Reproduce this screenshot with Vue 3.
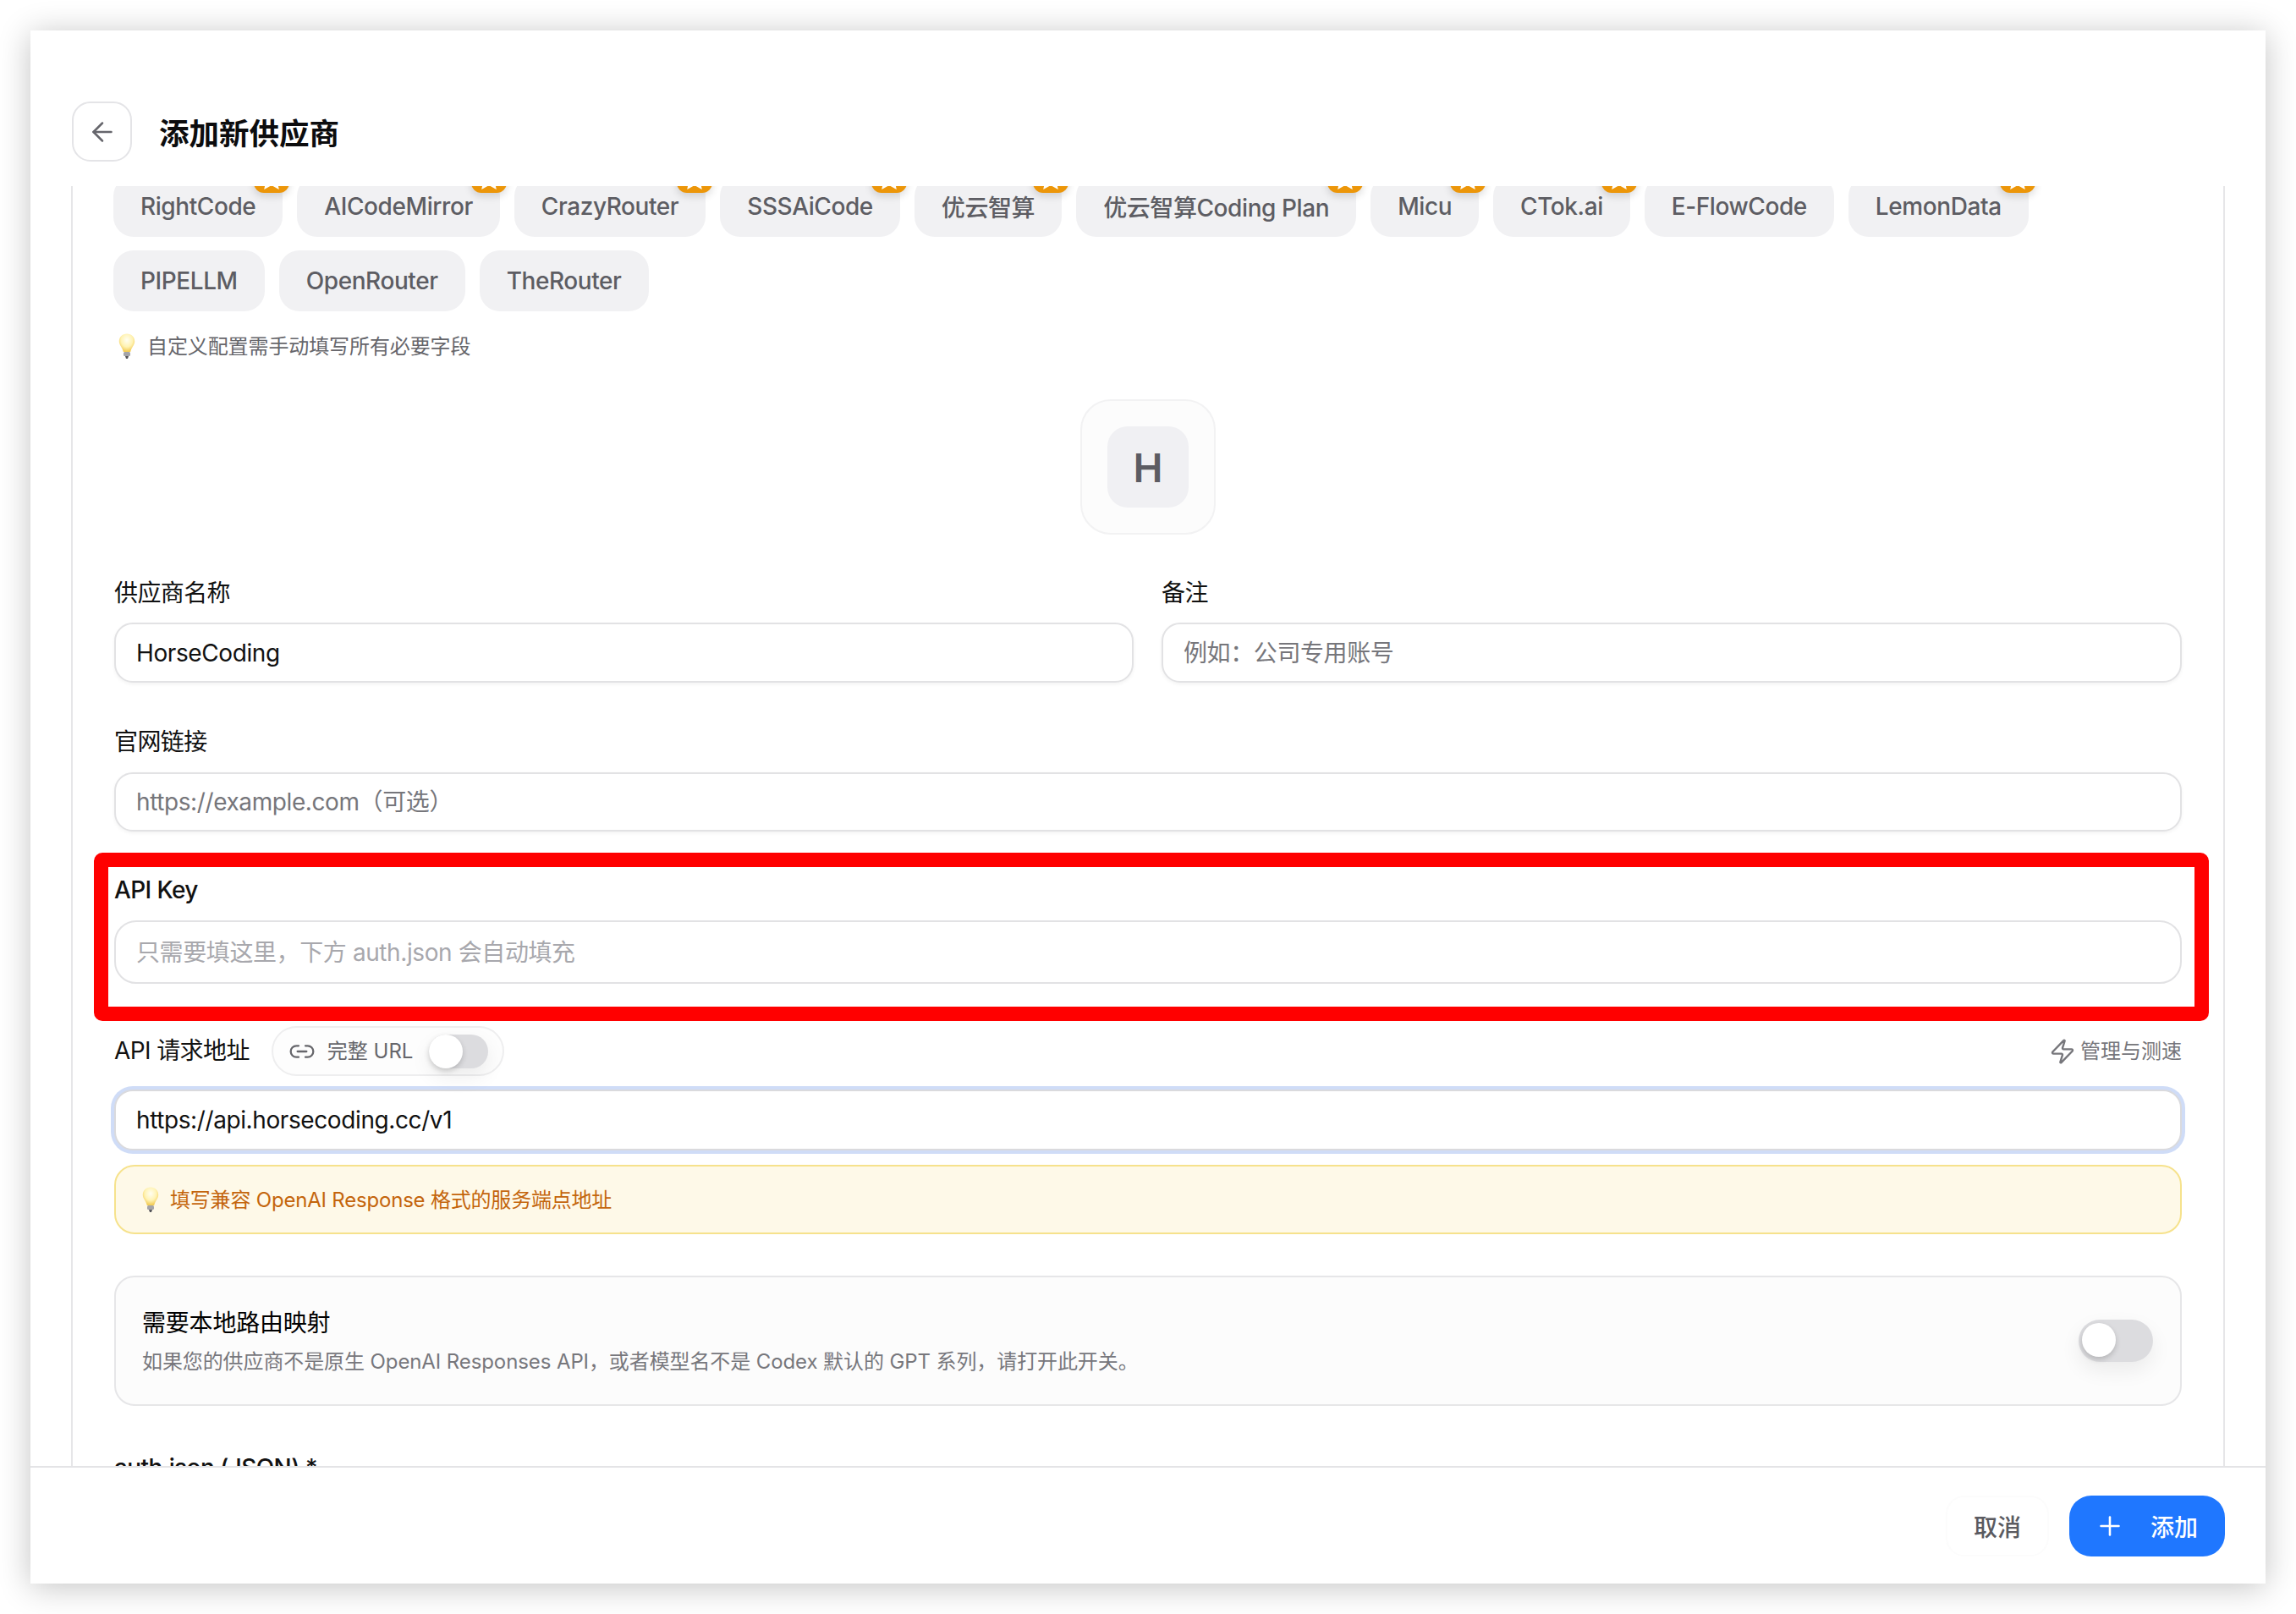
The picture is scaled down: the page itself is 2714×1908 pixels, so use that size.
<template>
  <div class="window">
    <header class="head">
      <button class="back" aria-label="返回">
        <svg width="36" height="36" viewBox="0 0 24 24" fill="none" stroke="currentColor" stroke-width="1.7" stroke-linecap="round" stroke-linejoin="round">
          <path d="m12 19-7-7 7-7" />
          <path d="M19 12H5" />
        </svg>
      </button>
      <h1 class="title">添加新供应商</h1>
    </header>

    <main class="scroll">
      <div class="form">
        <div class="chips">
          <button v-for="chip in chips" :key="chip.name" class="chip">
            {{ chip.name }}
            <span v-if="chip.star" class="badge">
              <svg width="34" height="34" viewBox="0 0 24 24" fill="#fff">
                <path d="m12 2 3 6.6 7 .8-5.200 4.800 1.400 7L12 17.700 5.800 21.200l1.400-7L2 9.400l7-.8z" />
              </svg>
            </span>
          </button>
        </div>

        <p class="hint">
          <svg class="bulb" width="20" height="30" viewBox="0 0 20 30">
            <defs>
              <radialGradient id="glow" cx="50%" cy="35%" r="62%">
                <stop offset="0" stop-color="#fffef2" />
                <stop offset="0.6" stop-color="#fff3b4" />
                <stop offset="1" stop-color="#f3cd58" />
              </radialGradient>
            </defs>
            <path d="M10 .5C4.500 .5 .8 4.600 .8 9.500c0 4.300 3.700 7 5 12.500h8.400c1.300-5.500 5-8.200 5-12.500C19.200 4.600 15.500 .5 10 .5z" fill="url(#glow)" />
            <rect x="6" y="22" width="8" height="5" rx="1.500" fill="#a4a4a8" />
            <path d="M8 27h4l-1 3H9z" fill="#55555a" />
          </svg>
          <span class="lift">自定义配置需手动填写所有必要字段</span>
        </p>

        <div class="logo-wrap">
          <div class="logo">
            <div class="logo-inner">H</div>
          </div>
        </div>

        <div class="two-col">
          <div class="field">
            <label class="label">供应商名称</label>
            <input class="input" value="HorseCoding" />
          </div>
          <div class="field">
            <label class="label">备注</label>
            <input class="input" placeholder="例如：公司专用账号" />
          </div>
        </div>

        <div class="field site">
          <label class="label">官网链接</label>
          <input class="input short" placeholder="https://example.com（可选）" />
        </div>

        <div class="field key">
          <label class="label latin">API Key</label>
          <input class="input tall light" placeholder="只需要填这里，下方 auth.json 会自动填充" />
          <div class="marker"></div>
        </div>

        <div class="url-row">
          <div class="url-left">
            <label class="label">API 请求地址</label>
            <div class="pill">
              <svg width="32" height="32" viewBox="0 0 24 24" fill="none" stroke="currentColor" stroke-width="1.700" stroke-linecap="round" stroke-linejoin="round">
                <path d="M9 17H7A5 5 0 0 1 7 7h2" />
                <path d="M15 7h2a5 5 0 1 1 0 10h-2" />
                <line x1="8" y1="12" x2="16" y2="12" />
              </svg>
              <span class="lift">完整 URL</span>
              <span class="switch small"><span class="knob"></span></span>
            </div>
          </div>
          <a class="speed">
            <svg width="32" height="32" viewBox="0 0 24 24" fill="none" stroke="currentColor" stroke-width="1.800" stroke-linecap="round" stroke-linejoin="round">
              <path d="M4 14a1 1 0 0 1-.78-1.630l9.900-10.200a.5.5 0 0 1 .86.460l-1.920 6.020A1 1 0 0 0 13 10h7a1 1 0 0 1 .78 1.630l-9.900 10.200a.5.5 0 0 1-.86-.460l1.920-6.020A1 1 0 0 0 11 14z" />
            </svg>
            <span class="lift">管理与测速</span>
          </a>
        </div>
        <input class="input focused" value="https://api.horsecoding.cc/v1" />

        <div class="notice">
          <svg class="bulb" width="20" height="30" viewBox="0 0 20 30">
            <path d="M10 .5C4.500 .5 .8 4.600 .8 9.500c0 4.300 3.700 7 5 12.500h8.400c1.300-5.500 5-8.200 5-12.500C19.200 4.600 15.500 .5 10 .5z" fill="url(#glow)" />
            <rect x="6" y="22" width="8" height="5" rx="1.500" fill="#a4a4a8" />
            <path d="M8 27h4l-1 3H9z" fill="#55555a" />
          </svg>
          <span class="lift">填写兼容 OpenAI Response 格式的服务端点地址</span>
        </div>

        <div class="card">
          <div>
            <div class="card-title">需要本地路由映射</div>
            <div class="card-desc">如果您的供应商不是原生 OpenAI Responses API，或者模型名不是 Codex 默认的 GPT 系列，请打开此开关。</div>
          </div>
          <span class="switch"><span class="knob"></span></span>
        </div>

        <label class="label latin auth">auth.json (JSON) *</label>
      </div>
    </main>

    <footer class="foot">
      <button class="cancel">取消</button>
      <button class="add">
        <svg width="36" height="36" viewBox="0 0 24 24" fill="none" stroke="currentColor" stroke-width="1.700" stroke-linecap="round" stroke-linejoin="round">
          <path d="M5 12h14" />
          <path d="M12 5v14" />
        </svg>
        添加
      </button>
    </footer>
  </div>
</template>

<script setup>
const chips = [
  { name: 'RightCode', star: true },
  { name: 'AICodeMirror', star: true },
  { name: 'CrazyRouter', star: true },
  { name: 'SSSAiCode', star: true },
  { name: '优云智算', star: true },
  { name: '优云智算Coding Plan', star: true },
  { name: 'Micu', star: true },
  { name: 'CTok.ai', star: true },
  { name: 'E-FlowCode', star: false },
  { name: 'LemonData', star: true },
  { name: 'PIPELLM', star: false },
  { name: 'OpenRouter', star: false },
  { name: 'TheRouter', star: false },
];
</script>

<style>
body {
  background: #fff;
  overflow: hidden;
}
</style>

<style scoped>
.window {
  box-sizing: border-box;
  width: 2642px;
  height: 1836px;
  margin: 36px;
  background: #fff;
  box-shadow: 0 4px 36px rgba(0, 0, 0, 0.24);
  display: flex;
  flex-direction: column;
  font-family: Inter, "Noto Sans CJK SC", sans-serif;
  color: #111;
}

.head {
  height: 184px;
  flex: none;
  box-sizing: border-box;
  padding: 84px 49px 0;
  display: flex;
  align-items: flex-start;
  gap: 32px;
}

.back {
  width: 71px;
  height: 71px;
  padding: 0;
  border: 2px solid #e4e4e7;
  border-radius: 22px;
  background: #fff;
  color: #66666c;
  display: flex;
  align-items: center;
  justify-content: center;
}

.title {
  margin: 3px 0 0;
  font-size: 35.5px;
  line-height: 71px;
  font-weight: 600;
  color: #0c0c0e;
}

.scroll {
  flex: 1;
  min-height: 0;
  margin: 0 48px;
  border-left: 2px solid #e6e6e8;
  border-right: 2px solid #e6e6e8;
  padding: 0 49px;
  overflow: hidden;
}

.form {
  margin-top: -12px;
}

.lift {
  margin-bottom: 4px;
}

.chips {
  display: flex;
  flex-wrap: wrap;
  gap: 16px 17px;
  margin-left: -1px;
}

.chip {
  position: relative;
  height: 72px;
  padding: 0 32px;
  border: 0;
  border-radius: 24px;
  background: #f1f1f3;
  color: #5d5d63;
  font: 500 28px Inter, "Noto Sans CJK SC", sans-serif;
  letter-spacing: -0.42px;
  white-space: nowrap;
}

.badge {
  position: absolute;
  top: -22px;
  right: -8px;
  width: 42px;
  height: 42px;
  border-radius: 12px;
  background: #ec9609;
  box-shadow: 0 4px 10px rgba(0, 0, 0, 0.14);
  display: flex;
  align-items: center;
  justify-content: center;
}

.badge svg {
  margin-top: 8px;
  flex: none;
}

.hint {
  margin: 24px 0 0 5px;
  display: flex;
  align-items: center;
  gap: 14px;
  height: 34px;
  font-size: 24px;
  letter-spacing: -0.1px;
  color: #66666b;
}

.logo-wrap {
  margin-top: 46px;
  display: flex;
  justify-content: center;
}

.logo {
  box-sizing: border-box;
  width: 160px;
  height: 160px;
  border: 2px solid #f2f2f3;
  border-radius: 36px;
  background: #fcfcfc;
  display: flex;
  align-items: center;
  justify-content: center;
}

.logo-inner {
  width: 96px;
  height: 96px;
  border-radius: 24px;
  background: #f0f0f3;
  color: #5c5c62;
  font-size: 47px;
  font-weight: 600;
  display: flex;
  align-items: center;
  justify-content: center;
}

.two-col {
  margin-top: 50px;
  display: grid;
  grid-template-columns: 1205px 1206px;
  gap: 33px;
}

.field {
  display: flex;
  flex-direction: column;
  gap: 15px;
}

.two-col .field {
  gap: 14px;
}

.site {
  margin-top: 51px;
}

.key {
  position: relative;
  margin-top: 50px;
}

.label {
  display: block;
  padding-bottom: 2px;
  font-size: 28px;
  line-height: 38px;
  font-weight: 400;
  letter-spacing: -0.6px;
  color: #111;
  white-space: nowrap;
}

.latin {
  font-weight: 500;
}

.input {
  box-sizing: border-box;
  display: block;
  width: 100%;
  height: 71px;
  padding: 0 24px;
  border: 2px solid #e2e2e4;
  border-radius: 22px;
  background: #fff;
  box-shadow: 0 2px 4px rgba(0, 0, 0, 0.05);
  outline: none;
  font: 400 28px Inter, "Noto Sans CJK SC", sans-serif;
  letter-spacing: -0.4px;
  color: #111;
}

.input::placeholder {
  color: #76767b;
}

.short {
  height: 70px;
}

.tall {
  height: 75px;
  border-radius: 26px;
  box-shadow: none;
}

.light::placeholder {
  color: #a8a8ad;
}

.marker {
  position: absolute;
  top: -25px;
  left: -24px;
  right: -32px;
  bottom: -44px;
  border: 17px solid #ff0000;
  border-radius: 10px;
  pointer-events: none;
}

.url-row {
  margin-top: 50px;
  height: 59px;
  display: flex;
  align-items: center;
  justify-content: space-between;
}

.url-left {
  display: flex;
  align-items: center;
  gap: 26px;
}

.pill {
  box-sizing: border-box;
  width: 275px;
  height: 59px;
  padding-left: 18px;
  border: 2px solid #eeeeef;
  border-radius: 30px;
  background: #fdfdfd;
  display: flex;
  align-items: center;
  gap: 14px;
  font-size: 24px;
  color: #66666b;
  white-space: nowrap;
}

.switch {
  box-sizing: border-box;
  flex: none;
  width: 88px;
  height: 50px;
  padding: 4px;
  border-radius: 25px;
  background: #dcdcdf;
  box-shadow: 0 10px 24px rgba(0, 0, 0, 0.07);
  display: flex;
}

.knob {
  width: 40px;
  height: 40px;
  border-radius: 50%;
  background: #fff;
  box-shadow: 0 3px 6px rgba(0, 0, 0, 0.18);
}

.switch.small {
  width: 70px;
  height: 40px;
  padding: 0;
  border-radius: 20px;
  margin-left: 5px;
}

.speed {
  display: flex;
  align-items: center;
  gap: 5px;
  font-size: 24px;
  color: #76767b;
  white-space: nowrap;
}

.focused {
  margin-top: 16px;
  height: 72px;
  border-color: #dadadd;
  box-shadow: 0 0 0 4px #cfdcf7;
}

.notice {
  box-sizing: border-box;
  margin-top: 17px;
  height: 82px;
  padding-left: 31px;
  border: 2px solid #f6e28c;
  border-radius: 24px;
  background: #fef9e8;
  display: flex;
  align-items: center;
  gap: 13px;
  font-size: 24px;
  letter-spacing: -0.2px;
  color: #c4650c;
}

.card {
  box-sizing: border-box;
  margin-top: 49px;
  height: 154px;
  padding: 0 32px 0 31px;
  border: 2px solid #e6e6e8;
  border-radius: 24px;
  background: #fcfcfc;
  display: flex;
  align-items: center;
  justify-content: space-between;
}

.card-title {
  font-size: 28px;
  line-height: 40px;
  font-weight: 400;
  letter-spacing: -0.2px;
  color: #000;
}

.card-desc {
  margin-top: 9px;
  font-size: 24px;
  line-height: 34px;
  letter-spacing: -0.1px;
  color: #77777c;
}

.auth {
  margin-top: 54px;
}

.foot {
  flex: none;
  height: 139px;
  box-sizing: border-box;
  border-top: 2px solid #e4e4e6;
  padding: 33px 48px 0 0;
  display: flex;
  justify-content: flex-end;
  gap: 24px;
}

.cancel {
  width: 122px;
  height: 72px;
  border: 2px solid #fcfcfc;
  border-radius: 22px;
  background: #fff;
  color: #5a5a60;
  font: 500 28px Inter, "Noto Sans CJK SC", sans-serif;
}

.add {
  box-sizing: border-box;
  width: 184px;
  height: 72px;
  padding: 0 32px 0 30px;
  border: 0;
  border-radius: 26px;
  background: #1f77ff;
  color: #fff;
  display: flex;
  align-items: center;
  gap: 30px;
  font: 500 28px Inter, "Noto Sans CJK SC", sans-serif;
  white-space: nowrap;
}
</style>
